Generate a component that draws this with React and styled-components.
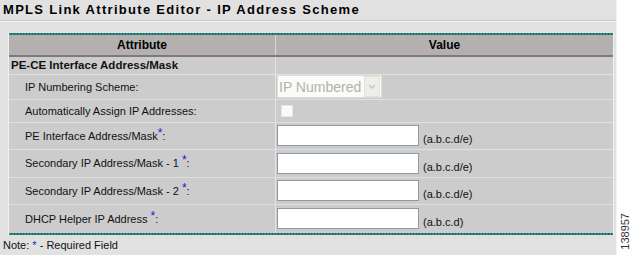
import React from 'react'
import styled, { createGlobalStyle } from 'styled-components'

const GlobalStyle = createGlobalStyle`
  body {
    margin: 0;
    background: #ffffff;
    font-family: "Liberation Sans", Arial, sans-serif;
  }
`

const Frame = styled.div`
  display: flex;
  flex-direction: row;
  width: 632px;
  height: 255px;
  overflow: hidden;
`

const Main = styled.div`
  width: 616px;
  background: #e1e1e1;
  border-right: 1px solid #f2f2f2;
  display: flex;
  flex-direction: column;
`

const Side = styled.div`
  flex: 1;
  display: flex;
  flex-direction: column;
  justify-content: flex-end;
  align-items: center;
  padding-bottom: 5px;
`

const FigureNumber = styled.div`
  writing-mode: vertical-rl;
  transform: rotate(180deg);
  font-size: 11px;
  color: #333;
`

const Title = styled.div`
  height: 20px;
  padding-left: 3px;
  font-weight: bold;
  font-size: 13px;
  letter-spacing: 1.3px;
  line-height: 20px;
  color: #000;
  border-bottom: 1px solid #c6c6c6;
  box-shadow: 0 1px 0 #f6f6f6;
`

const TableBox = styled.div`
  margin: 12px 2px 0 8px;
  border-left: 1px solid #f0f0f0;
  border-right: 1px solid #f0f0f0;
  background: #cccccc;
`

const TealRule = styled.div`
  height: 2px;
  background: repeating-linear-gradient(90deg, #2c8c86 0 2px, #1a5e5a 2px 3px);
`

const Table = styled.table`
  width: 100%;
  border-collapse: collapse;
  table-layout: fixed;
`

const HeadCell = styled.th`
  height: 20px;
  padding: 0;
  background: #b4b0b0;
  border-bottom: 2px solid #7c7a7a;
  border-left: ${p => (p.$first ? 'none' : '1px solid #d8d8d8')};
  font-size: 12px;
  font-weight: bold;
  color: #000;
  text-align: center;
  width: ${p => p.$w || 'auto'};
`

const Row = styled.tr`
  height: ${p => p.$h}px;
  td {
    border-bottom: ${p => (p.$last ? 'none' : '1px solid #e0e0e0')};
  }
`

const LabelCell = styled.td`
  padding: 0 0 0 ${p => (p.$section ? 2 : 16)}px;
  font-size: ${p => (p.$section ? 11.5 : 11)}px;
  font-weight: ${p => (p.$section ? 'bold' : 'normal')};
  color: #111;
  white-space: nowrap;
`

const ValueCell = styled.td`
  padding: 0 0 0 1px;
  border-left: 1px solid #e4e4e4;
`

const Field = styled.div`
  display: flex;
  align-items: flex-end;
  gap: 4px;
`

const Required = styled.sup`
  color: #1a1acc;
  font-size: 12px;
  vertical-align: 3px;
  line-height: 0;
`

const FakeSelect = styled.div`
  display: flex;
  align-items: center;
  width: 102px;
  height: 21px;
  background: #fbfbf7;
  border: 1px solid #dcdcd4;
  font-size: 14px;
  color: #b2b2b2;
  padding-left: 1px;
  white-space: nowrap;
`

const SelectText = styled.span`
  flex: 1;
`

const SelectArrow = styled.span`
  width: 14px;
  height: 19px;
  margin-right: 1px;
  background: #eeeee8;
  border: 1px solid #e2e2dc;
  display: flex;
  align-items: center;
  justify-content: center;
`

const Check = styled.input`
  appearance: none;
  margin: 0 0 0 4px;
  width: 12px;
  height: 12px;
  background: #fafafa;
  border: 1px solid #e6e6e6;
  display: block;
`

const TextBox = styled.input`
  width: 142px;
  height: 21px;
  box-sizing: border-box;
  border: 1px solid #8e9aa6;
  background: #fff;
  margin: 0;
`

const Hint = styled.span`
  font-size: 11px;
  color: #111;
  margin-bottom: 1px;
`

const Note = styled.div`
  padding: 4px 0 0 3px;
  font-size: 11px;
  color: #111;
`

const Star = styled.span`
  color: #1a1acc;
`

const fields = [
  { label: 'PE Interface Address/Mask', star: '*', hint: '(a.b.c.d/e)', h: 27 },
  { label: 'Secondary IP Address/Mask - 1 ', star: '*', hint: '(a.b.c.d/e)', h: 28 },
  { label: 'Secondary IP Address/Mask - 2 ', star: '*', hint: '(a.b.c.d/e)', h: 27 },
  { label: 'DHCP Helper IP Address ', star: '*', hint: '(a.b.c.d)', h: 29 },
]

const App = () => {
  return (
    <Frame>
      <GlobalStyle />
      <Main>
        <Title>MPLS Link Attribute Editor - IP Address Scheme</Title>
        <TableBox>
          <TealRule />
          <Table>
            <thead>
              <tr>
                <HeadCell $first $w="266px">Attribute</HeadCell>
                <HeadCell>Value</HeadCell>
              </tr>
            </thead>
            <tbody>
              <Row $h={18}>
                <LabelCell $section>PE-CE Interface Address/Mask</LabelCell>
                <ValueCell />
              </Row>
              <Row $h={25}>
                <LabelCell>IP Numbering Scheme:</LabelCell>
                <ValueCell>
                  <FakeSelect>
                    <SelectText>IP Numbered</SelectText>
                    <SelectArrow>
                      <svg width="8" height="5" viewBox="0 0 8 5">
                        <path d="M1 1 L4 4 L7 1" fill="none" stroke="#c4c4c0" strokeWidth="1.4" />
                      </svg>
                    </SelectArrow>
                  </FakeSelect>
                </ValueCell>
              </Row>
              <Row $h={23}>
                <LabelCell>Automatically Assign IP Addresses:</LabelCell>
                <ValueCell>
                  <Check type="checkbox" disabled />
                </ValueCell>
              </Row>
              {fields.map((f, i) => (
                <Row key={f.label} $h={f.h} $last={i === fields.length - 1}>
                  <LabelCell>
                    {f.label}
                    <Required>{f.star}</Required>:
                  </LabelCell>
                  <ValueCell>
                    <Field>
                      <TextBox type="text" />
                      <Hint>{f.hint}</Hint>
                    </Field>
                  </ValueCell>
                </Row>
              ))}
            </tbody>
          </Table>
          <TealRule />
        </TableBox>
        <Note>
          Note: <Star>*</Star> - Required Field
        </Note>
      </Main>
      <Side>
        <FigureNumber>138957</FigureNumber>
      </Side>
    </Frame>
  )
}

export default App
